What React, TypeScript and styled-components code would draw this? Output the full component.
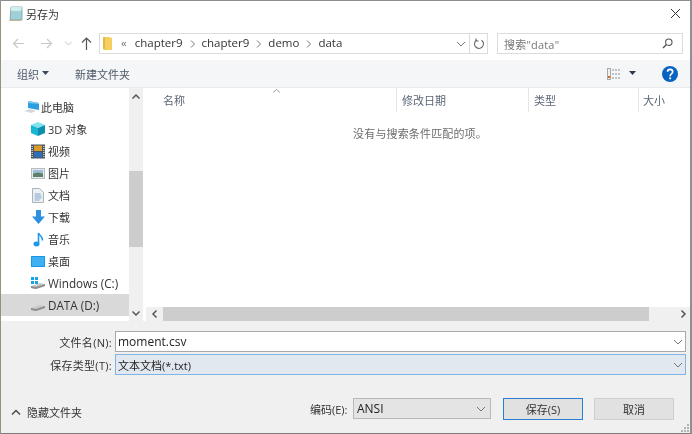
import React from "react";
import styled, { createGlobalStyle } from "styled-components";

const Global = createGlobalStyle`
  html, body { margin: 0; padding: 0; background: #fff; }
  body { font-family: "Open Sans", "Noto Sans CJK SC", sans-serif; font-size: 11px; color: #222; }
  * { box-sizing: border-box; }
`;

const Window = styled.div`
  width: 692px; height: 434px; display: flex; flex-direction: column; overflow: hidden;
  background: #fff; border-top: 1px solid #8c8c8c; border-left: 1px solid #9a9082;
  border-right: 2px solid #8f8f8f; border-bottom: 1px solid #7d7d7d;
  filter: blur(0.35px);
`;
const TitleBar = styled.div`
  height: 27px; display: flex; align-items: center; padding: 0 9px 2px 7px; gap: 2px; flex: none; font-size: 11px; color: #333;
`;
const Grow = styled.div`flex: 1;`;
const NavRow = styled.div`
  height: 32px; flex: none; display: flex; align-items: flex-start; padding: 5px 7px 0 0;
`;
const NavIcons = styled.div`width: 98px; height: 20px; flex: none; display: flex; align-items: center; padding-left: 11px;`;
const NavSlot = styled.span<{ $w: number }>`width: ${p => p.$w}px; display: flex; align-items: center; flex: none;`;
const AddressBar = styled.div`
  width: 389px; height: 21px; flex: none; border: 1px solid #dcdcdc; display: flex; align-items: center; padding-left: 3px; color: #333; font-size: 11.5px;
`;
const Crumb = styled.span`margin-right: 6px; line-height: 1; padding-bottom: 2px;`;
const Chev = styled.span`color: #777; margin-right: 5px; display: flex;`;
const Quote = styled(Chev)`margin-right: 8px; padding-bottom: 2px;`;
const RefreshSlot = styled.span`
  width: 18px; height: 19px; border-left: 1px solid #dcdcdc; display: flex; align-items: center; justify-content: center; flex: none;
`;
const SearchBox = styled.div`
  width: 186px; height: 21px; margin-left: 9px; flex: none; border: 1px solid #dcdcdc; display: flex; align-items: center;
  justify-content: space-between; padding: 0 9px 0 6px; color: #777; letter-spacing: 0.2px;
`;
const Toolbar = styled.div`
  height: 28px; flex: none; background: #f5f6f7; border-bottom: 1px solid #e9eaeb; display: flex; align-items: center; color: #4c5a6b; padding: 0 12px 0 16px;
`;
const ToolItem = styled.span<{ $w: number }>`width: ${p => p.$w}px; flex: none; display: flex; align-items: center; gap: 3px;`;
const ViewIcon = styled.svg`margin-right: 8px; flex: none;`;
const ViewCaret = styled.span`display: flex; margin-right: 26px;`;
const Main = styled.div`height: 233px; flex: none; display: flex;`;
const Side = styled.div`width: 128px; flex: none; background: #fff; padding-top: 8px; display: flex; flex-direction: column;`;
const SideRow = styled.div<{ $sel?: boolean; $latin?: boolean; $top?: boolean }>`
  height: 22px; flex: none; display: flex; align-items: center; gap: ${p => (p.$top ? 0 : 2)}px; padding-left: ${p => (p.$top ? 23 : 29)}px;
  background: ${p => (p.$sel ? "#d9d9d9" : "transparent")}; color: #333; white-space: nowrap;
  font-size: ${p => (p.$latin ? 11.7 : 11)}px;
`;
const SideIcon = styled.span<{ $w?: number }>`width: ${p => p.$w ?? 16}px; height: 16px; flex: none; display: flex; align-items: center; justify-content: center;`;
const VScroll = styled.div`width: 14px; flex: none; background: #f0f0f0; display: flex; flex-direction: column; align-items: stretch;`;
const ArrowBox = styled.div`height: 17px; flex: none; display: flex; align-items: center; justify-content: center;`;
const VTrack = styled.div`flex: 1; display: flex; flex-direction: column; padding-top: 66px; padding-bottom: 57px;`;
const VThumb = styled.div`flex: 1; background: #cdcdcd;`;
const Gutter = styled.div`width: 3px; flex: none; background: #fff;`;
const ListPane = styled.div`flex: 1; display: flex; flex-direction: column; min-width: 0;`;
const HeaderRow = styled.div`height: 24px; flex: none; display: flex; position: relative; color: #5a6675;`;
const HeadCell = styled.div<{ $w: number; $pl: number; $sep?: boolean }>`
  width: ${p => p.$w}px; flex: none; padding-left: ${p => p.$pl}px; padding-top: 4px; border-right: ${p => (p.$sep ? "1px solid #e5e5e5" : "0")};
`;
const SortCaret = styled.span`position: absolute; left: 126px; top: 0; display: flex;`;
const ListBody = styled.div`flex: 1; text-align: center; padding: 13px 0 0 4px; color: #6d6d6d; letter-spacing: 0.15px;`;
const HScroll = styled.div`height: 14px; flex: none; background: #f0f0f0; display: flex;`;
const HArrow = styled.div<{ $w: number }>`width: ${p => p.$w}px; flex: none; display: flex; align-items: center; justify-content: center;`;
const HThumb = styled.div`width: 486px; flex: none; background: #cdcdcd;`;
const HRest = styled.div`flex: 1;`;
const Bottom = styled.div`flex: 1; background: #f0f0f0; display: flex; flex-direction: column; padding-top: 10px; position: relative;`;
const FieldRow = styled.div`display: flex; align-items: center; height: 21px; margin-bottom: 2px;`;
const FieldLabel = styled.div`width: 114px; text-align: right; padding-right: 3px; flex: none; color: #333; letter-spacing: 0.3px;`;
const Field = styled.div<{ $focus?: boolean }>`
  width: 571px; height: 21px; flex: none; border: 1px solid ${p => (p.$focus ? "#7fb4e4" : "#a9a9a9")};
  background: ${p => (p.$focus ? "#e1e8f0" : "#fff")}; display: flex; align-items: center; justify-content: space-between; padding: 0 1px 0 2px;
  font-size: ${p => (p.$focus ? 11 : 12)}px;
`;
const FooterRow = styled.div`display: flex; align-items: flex-start; margin-top: 21px; height: 24px;`;
const HideFolders = styled.div`width: 309px; flex: none; display: flex; align-items: center; gap: 6px; padding: 6px 0 0 10px; color: #333;`;
const EncodingLabel = styled.div`width: 43px; flex: none; padding-top: 3px; color: #333;`;
const EncodingSelect = styled.div`
  width: 138px; height: 21px; flex: none; border: 1px solid #b8b8b8; background: #e4e4e4; display: flex; align-items: center;
  justify-content: space-between; padding: 0 3px 0 3px; font-size: 12px;
`;
const Btn = styled.div<{ $primary?: boolean }>`
  width: 80px; height: 22px; flex: none; display: flex; align-items: center; justify-content: center; background: #e1e1e1;
  border: ${p => (p.$primary ? "1px solid #2a7fd0" : "1px solid #cfcfcf")}; margin-left: ${p => (p.$primary ? 12 : 11)}px; color: #333;
`;
const Grip = styled.svg`position: absolute; right: 0; bottom: 0;`;

const Down = ({ c = "#777" }: { c?: string }) => (
  <svg width="12" height="12" viewBox="0 0 12 12"><path d="M2 4l4 4 4-4" fill="none" stroke={c} strokeWidth="1" /></svg>
);
const Right = () => (
  <svg width="8" height="10" viewBox="0 0 8 10"><path d="M2 1.500L5.500 5 2 8.500" fill="none" stroke="#777" strokeWidth="1" /></svg>
);
const Tri = ({ c = "#3b4a5c" }: { c?: string }) => (
  <svg width="7" height="5" viewBox="0 0 7 5"><path d="M0 0h7L3.500 4z" fill={c} /></svg>
);
const Chevron = ({ d, c = "#555" }: { d: string; c?: string }) => (
  <svg width="10" height="10" viewBox="0 0 10 10"><path d={d} fill="none" stroke={c} strokeWidth="1.5" /></svg>
);

const Disk = ({ win }: { win?: boolean }) => (
  <svg width="16" height="16" viewBox="0 0 16 16">
    <path d="M1 11l9-3 5 1v2l-9 3-5-1z" fill="#c9c9c9" />
    <path d="M1 11l5 1 9-3v2l-9 3-5-1z" fill="#8d8d8d" />
    {win && <g fill="#19a3e6"><rect x="1" y="2" width="3" height="3" /><rect x="5" y="2" width="3" height="3" /><rect x="1" y="6" width="3" height="3" /><rect x="5" y="6" width="3" height="3" /></g>}
  </svg>
);

const icons: Record<string, React.ReactNode> = {
  pc: (
    <svg width="17" height="16" viewBox="0 0 17 16">
      <path d="M4 2l11 2v7L4 9z" fill="#2d9fe0" /><path d="M4 2l11 2v1L4 4z" fill="#7fc8ee" />
      <path d="M0 12l6-2 6 2-5 2z" fill="#d5d8da" />
    </svg>
  ),
  cube: (
    <svg width="16" height="16" viewBox="0 0 16 16">
      <path d="M8 1l7 3-7 3-7-3z" fill="#7fe3ee" /><path d="M1 4l7 3v8l-7-3z" fill="#18b6d2" /><path d="M15 4v8l-7 3V7z" fill="#0f8fb0" />
    </svg>
  ),
  video: (
    <svg width="14" height="15" viewBox="0 0 14 15">
      <rect x="0" y="0.500" width="14" height="14" fill="#4a5560" />
      <rect x="3" y="1.500" width="8" height="5.500" fill="#d89a2a" /><rect x="3" y="8" width="8" height="5.500" fill="#2f6fb5" />
      <path d="M1.200 2v11M12.800 2v11" stroke="#cfd5da" strokeWidth="1.400" strokeDasharray="1 1" />
    </svg>
  ),
  pic: (
    <svg width="14" height="11" viewBox="0 0 14 11">
      <rect x="0.500" y="0.500" width="13" height="10" fill="#e6eaee" stroke="#b6bcc2" />
      <rect x="2" y="2" width="10" height="3.500" fill="#9cc0d8" /><path d="M2 5.500l5-1 5 1V9H2z" fill="#5f7f6c" />
    </svg>
  ),
  doc: (
    <svg width="12" height="15" viewBox="0 0 12 15">
      <path d="M.5.500h7l4 4v10H.5z" fill="#eef1f4" stroke="#aab2ba" />
      <path d="M2.500 6h6M2.500 8h7M2.500 10h7M2.500 12h5" stroke="#7fa6c8" strokeWidth="1" />
    </svg>
  ),
  dl: (
    <svg width="13" height="14" viewBox="0 0 13 14"><path d="M4 0h5v6.500h4L6.500 14 0 6.500h4z" fill="#2f8fe0" /></svg>
  ),
  music: (
    <svg width="11" height="15" viewBox="0 0 11 15">
      <path d="M5.500 1v10.500" stroke="#1f97ea" strokeWidth="1.600" fill="none" />
      <ellipse cx="3.500" cy="12" rx="3" ry="2.400" fill="#1f97ea" />
      <path d="M5.500 1c1 3 4.500 3.500 4 7.500" stroke="#1f97ea" strokeWidth="1.500" fill="none" />
    </svg>
  ),
  desk: (
    <svg width="14" height="11" viewBox="0 0 14 11">
      <rect width="14" height="11" rx="0.500" fill="#1596ea" /><rect x="1" y="1" width="12" height="9" fill="#3fb0f2" />
    </svg>
  ),
  win: <Disk win />,
  disk: <Disk />,
};

const places: [string, string, boolean][] = [
  ["cube", "3D 对象", false], ["video", "视频", false], ["pic", "图片", false], ["doc", "文档", false], ["dl", "下载", false],
  ["music", "音乐", false], ["desk", "桌面", false], ["win", "Windows (C:)", true], ["disk", "DATA (D:)", true],
];

export default function App() {
  return (
    <Window>
      <Global />
      <TitleBar>
        <svg width="16" height="16" viewBox="0 0 16 16" style={{ flex: "none" }}>
          <path d="M3 1h11v13H2z" fill="#9fd0d6" stroke="#7f9ea6" strokeWidth="0.800" />
          <path d="M3 1h11l-1 4H3z" fill="#cfeef0" />
          <path d="M1 15h11l2-1H2z" fill="#c5b48f" />
        </svg>
        <span>另存为</span>
        <Grow />
        <svg width="11" height="11" viewBox="0 0 11 11"><path d="M1 1l9 9M10 1l-9 9" stroke="#333" strokeWidth="1" /></svg>
      </TitleBar>
      <NavRow>
        <NavIcons>
          <NavSlot $w={28}><svg width="13" height="11" viewBox="0 0 13 11"><path d="M6 1L1.500 5.500 6 10M1.500 5.500H12" fill="none" stroke="#c8c8c8" strokeWidth="1.200" /></svg></NavSlot>
          <NavSlot $w={24}><svg width="13" height="11" viewBox="0 0 13 11"><path d="M7 1l4.500 4.500L7 10M11.500 5.500H1" fill="none" stroke="#c8c8c8" strokeWidth="1.200" /></svg></NavSlot>
          <NavSlot $w={17}><svg width="9" height="7" viewBox="0 0 9 7"><path d="M1 1.500l3.500 3.500L8 1.500" fill="none" stroke="#c8c8c8" strokeWidth="1" /></svg></NavSlot>
          <NavSlot $w={12}><svg width="11" height="13" viewBox="0 0 11 13"><path d="M1 5.500L5.500 1 10 5.500M5.500 1v12" fill="none" stroke="#555" strokeWidth="1.200" /></svg></NavSlot>
        </NavIcons>
        <AddressBar>
          <svg width="9" height="13" viewBox="0 0 9 13" style={{ marginRight: 9, flex: "none" }}>
            <path d="M0 0h6l3 1v12H1l-1-1z" fill="#f6cf62" /><path d="M0 0h2v12l-2 0z" fill="#e8b93f" />
          </svg>
          <Quote>«</Quote>
          <Crumb>chapter9</Crumb><Chev><Right /></Chev>
          <Crumb>chapter9</Crumb><Chev><Right /></Chev>
          <Crumb>demo</Crumb><Chev><Right /></Chev>
          <Crumb>data</Crumb>
          <Grow />
          <NavSlot $w={14}><Down /></NavSlot>
          <RefreshSlot>
            <svg width="12" height="12" viewBox="0 0 12 12"><path d="M8.500 2.200A4.500 4.500 0 1 1 3.800 2" fill="none" stroke="#666" strokeWidth="1.100" /><path d="M3 0.500v2.500h2.500" fill="none" stroke="#666" strokeWidth="1" /></svg>
          </RefreshSlot>
        </AddressBar>
        <SearchBox>
          <span>搜索"data"</span>
          <svg width="11" height="11" viewBox="0 0 11 11"><circle cx="6.800" cy="4.200" r="3.200" fill="none" stroke="#555" strokeWidth="1.100" /><path d="M4.500 6.500L1 10" stroke="#555" strokeWidth="1.500" /></svg>
        </SearchBox>
      </NavRow>
      <Toolbar>
        <ToolItem $w={58}>组织 <Tri /></ToolItem>
        <ToolItem $w={100}>新建文件夹</ToolItem>
        <Grow />
        <ViewIcon width="14" height="12" viewBox="0 0 14 12">
          <rect x="0.500" y="0.500" width="3" height="11" fill="#f4f1e6" stroke="#a8a8a8" />
          <path d="M5 2h9M5 6h9M5 10h9" stroke="#8c8c8c" strokeDasharray="2 1" />
          <rect x="1" y="8" width="2" height="2" fill="#d9622b" />
        </ViewIcon>
        <ViewCaret><Tri c="#2b3a4d" /></ViewCaret>
        <svg width="16" height="16" viewBox="0 0 15 15">
          <circle cx="7.500" cy="7.500" r="7.500" fill="#0a63c0" />
          <path d="M5.200 5.500c0-3 4.800-3 4.800 0 0 2-2.400 1.800-2.400 4" fill="none" stroke="#fff" strokeWidth="1.600" />
          <rect x="6.800" y="10.700" width="1.700" height="1.700" fill="#fff" />
        </svg>
      </Toolbar>
      <Main>
        <Side>
          <SideRow $top>
            <SideIcon $w={17}>{icons.pc}</SideIcon>此电脑
          </SideRow>
          {places.map(([ic, label, latin]) => (
            <SideRow key={label} $sel={ic === "disk"} $latin={latin}>
              <SideIcon>{icons[ic]}</SideIcon>{label}
            </SideRow>
          ))}
        </Side>
        <VScroll>
          <ArrowBox><Chevron d="M1.500 6.500L5 3l3.500 3.500" /></ArrowBox>
          <VTrack><VThumb /></VTrack>
          <ArrowBox><Chevron d="M1.500 3.500L5 7l3.500-3.500" /></ArrowBox>
        </VScroll>
        <Gutter />
        <ListPane>
          <HeaderRow>
            <HeadCell $w={251} $pl={17} $sep>名称</HeadCell>
            <HeadCell $w={132} $pl={5} $sep>修改日期</HeadCell>
            <HeadCell $w={110} $pl={5} $sep>类型</HeadCell>
            <HeadCell $w={51} $pl={4}>大小</HeadCell>
            <SortCaret><svg width="9" height="6" viewBox="0 0 9 6"><path d="M1 4.500L4.500 1.500 8 4.500" fill="none" stroke="#9aa0a6" strokeWidth="1" /></svg></SortCaret>
          </HeaderRow>
          <ListBody>没有与搜索条件匹配的项。</ListBody>
          <HScroll>
            <HArrow $w={17}><Chevron d="M6.500 1.500L3 5l3.500 3.500" /></HArrow>
            <HThumb />
            <HRest />
            <HArrow $w={15}><Chevron d="M3.500 1.500L7 5 3.500 8.500" /></HArrow>
          </HScroll>
        </ListPane>
      </Main>
      <Bottom>
        <FieldRow>
          <FieldLabel>文件名(N):</FieldLabel>
          <Field><span>moment.csv</span><Down /></Field>
        </FieldRow>
        <FieldRow>
          <FieldLabel>保存类型(T):</FieldLabel>
          <Field $focus><span>文本文档(*.txt)</span><Down /></Field>
        </FieldRow>
        <FooterRow>
          <HideFolders>
            <svg width="10" height="7" viewBox="0 0 10 7" style={{ flex: "none" }}><path d="M1 5.500L5 1.500l4 4" fill="none" stroke="#444" strokeWidth="1.400" /></svg>
            隐藏文件夹
          </HideFolders>
          <EncodingLabel>编码(E):</EncodingLabel>
          <EncodingSelect><span>ANSI</span><Down /></EncodingSelect>
          <Btn $primary>保存(S)</Btn>
          <Btn>取消</Btn>
        </FooterRow>
        <Grip width="10" height="10" viewBox="0 0 10 10">
          <g fill="#b5b5b5"><rect x="7" y="1" width="2" height="2" /><rect x="4" y="4" width="2" height="2" /><rect x="7" y="4" width="2" height="2" /><rect x="1" y="7" width="2" height="2" /><rect x="4" y="7" width="2" height="2" /><rect x="7" y="7" width="2" height="2" /></g>
        </Grip>
      </Bottom>
    </Window>
  );
}
